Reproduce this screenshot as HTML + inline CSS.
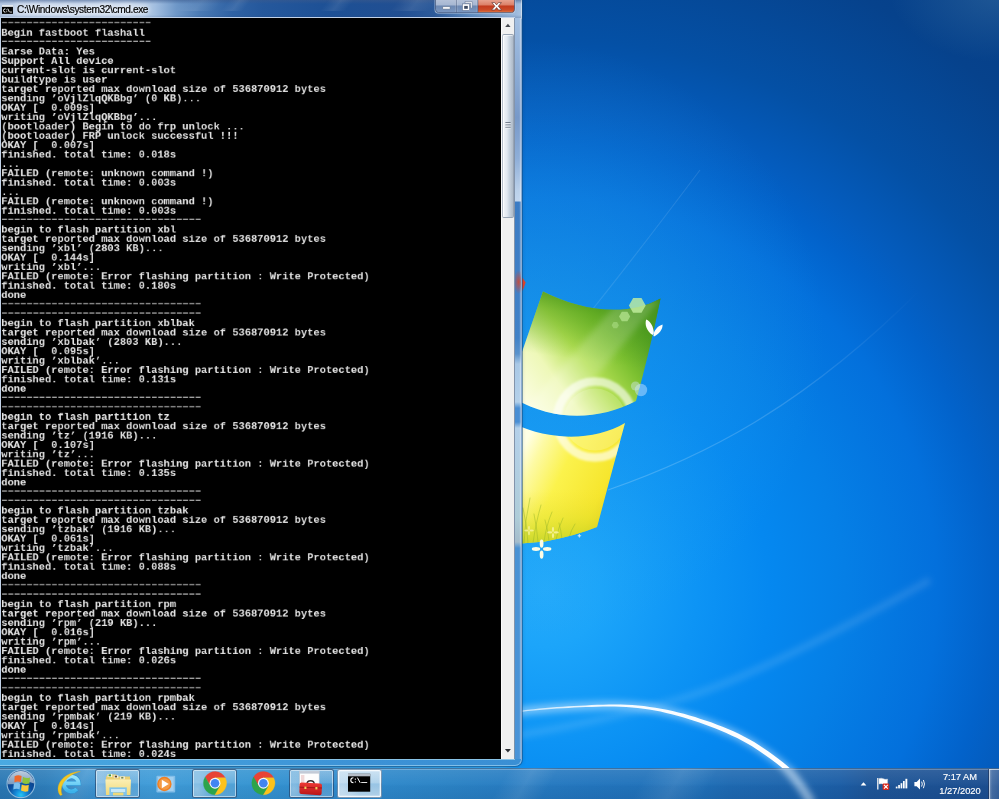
<!DOCTYPE html>
<html><head><meta charset="utf-8"><title>desktop</title>
<style>

html,body{margin:0;padding:0;}
body{width:999px;height:799px;overflow:hidden;position:relative;background:#0b5cb8;font-family:"Liberation Sans",sans-serif;}
#root{position:absolute;left:0;top:0;width:999px;height:799px;overflow:hidden;}
.abs{position:absolute;}
svg{position:absolute;overflow:visible;}
#wall{position:absolute;left:0;top:0;width:999px;height:799px;
 background:
  radial-gradient(ellipse 110px 70px at 1000px -8px, rgba(70,125,170,0.40) 0%, rgba(70,120,170,0) 100%),
  radial-gradient(circle 300px at 525px 340px, rgba(48,168,236,0.42) 0%, rgba(44,164,234,0.25) 50%, rgba(40,160,232,0) 100%),
  radial-gradient(circle 800px at 545px 590px, #24aafb 0%, #1ca5fa 7%, #0d94f5 19%, #0588f0 28%, #057fe6 37.5%, #0370dc 49%, #0262ca 56%, #045cbe 60%, #0450a5 69%, #06428c 84%, #063c84 100%);
}
/* ---------- window ---------- */
#win{position:absolute;left:-8px;top:-8px;width:529.5px;height:773.5px;border-radius:7px;overflow:hidden;
 box-shadow:0 0 0 1px rgba(20,76,128,0.52), 0 1px 4px rgba(0,30,70,0.2);
 background:#3f74b4;}
#win .tbar{position:absolute;left:8px;top:8px;width:522px;height:18.5px;
 background:linear-gradient(90deg,#b4c6e0 0px,#bccde6 20px,#c2d3ea 128px,#a2bee0 155px,#6f98c8 176px,#4a7ab4 200px,#2f62a4 232px,#25589c 262px,#1d5095 330px,#214f92 400px,#2c5a9a 434px,#5f8cc0 470px,#9cb9dc 516px,#a9c4e2 522px);}
#win .tbar:before{content:"";position:absolute;left:0;top:0;width:100%;height:100%;
 background:linear-gradient(180deg,rgba(60,90,140,0.55) 0px,rgba(60,90,140,0) 4px,rgba(60,90,140,0) 15px,rgba(30,60,110,0.25) 18.5px);}
#win .streak{position:absolute;top:0;height:19px;transform:skewX(-38deg);background:linear-gradient(90deg,rgba(255,255,255,0),rgba(255,255,255,0.09),rgba(255,255,255,0));}
#win .rb{position:absolute;left:522.3px;top:26px;width:7.2px;height:748px;
 background:linear-gradient(180deg,#a4c0e2 0px,#8aaad4 60px,#7799c9 100px,#8eaed8 140px,#bad0ea 172px,#c2d6ee 183px,#3c7cc4 184px,#4182c8 320px,#5a92cc 336px,#a9c8e6 346px,#b4d0ea 384px,#4a8ed4 390px,#4a8ed4 404px,#b4d0ea 410px,#aeccd8 500px,#a4bccc 524px,#4a92d4 530px,#4a94d8 748px);
 box-shadow:inset 1px 0 0 rgba(255,255,255,0.35), inset -1.2px 0 0 rgba(255,255,255,0.3);}
#win .bb{position:absolute;left:0px;top:766.6px;width:530px;height:7px;
 background:linear-gradient(90deg,#4aaae2 0%,#44a0dc 30%,#3c92d6 70%,#3a8fd4 100%);}
#win .lb{position:absolute;left:8px;top:26px;width:1px;height:742px;background:#c4d2e6;}
#win .edge{position:absolute;left:0;top:0;width:527.5px;height:771.5px;border-radius:7px;border:1px solid rgba(255,255,255,0.4);border-bottom-color:rgba(190,230,248,0.55);}
#inner{position:absolute;left:0.2px;top:17.3px;width:514.8px;height:742.6px;border:0;background:linear-gradient(180deg,#c2d2e8 0%,#c2d2e8 90%,#88c2e6 100%);}
#gap{position:absolute;left:0;top:765px;width:524px;height:4px;background:linear-gradient(90deg,#3a9cd6 0%,#3c9fdc 60%,#2ea4f0 96%,rgba(34,168,250,0) 100%);}
#client{position:absolute;left:1px;top:18.2px;width:499.8px;height:740.6px;background:#000;overflow:hidden;}
#con{position:absolute;left:0px;top:0px;margin:0;transform-origin:0 0;transform:translate(0.25px,1.35px) scale(0.7645,0.7806);will-change:transform;
 font-family:"Liberation Mono",monospace;font-weight:bold;font-size:13.61px;line-height:12px;color:#e4e4e4;white-space:pre;letter-spacing:0px;}
.dl{display:inline-block;transform-origin:0 50%;transform:translate(-2.45px,-0.7px) scaleX(1.66);letter-spacing:-3.248px;color:#a8a8a8;}
#sb{position:absolute;left:500.8px;top:18.2px;width:13.3px;height:740.6px;background:#f0f0f0;box-shadow:inset 1px 0 0 #fafafa, 0.8px 0 0 #74869c;}
#sb .thumb{position:absolute;left:1.5px;top:15.4px;width:11.8px;height:184.8px;box-sizing:border-box;border:1px solid #98a4b4;border-left-color:#b4bcc8;border-radius:2px;
 background:linear-gradient(90deg,#f2f5f9 0%,#e2e8f0 40%,#cbd6e2 60%,#aebac8 100%);box-shadow:inset 1px 0 0 rgba(255,255,255,0.8), inset 0 1px 0 rgba(255,255,255,0.6);}
#title{will-change:transform;position:absolute;left:17.2px;top:4px;font-size:10.1px;line-height:12px;color:#000;-webkit-text-stroke:0.2px #000;white-space:pre;letter-spacing:-0.36px;
 text-shadow:0 0 5px #fff,0 0 7px #fff,0 0 9px rgba(255,255,255,0.9);}
/* ---------- taskbar ---------- */
#tb{position:absolute;left:0;top:767.6px;width:999px;height:32px;overflow:hidden;
 background:linear-gradient(90deg,#2a78b4 0px,#2e7eba 45px,#3b94d2 95px,#409cd8 150px,#3695d2 250px,#308cce 330px,#2e88ca 390px,#2b83c5 450px,#277cc2 520px,#2376be 590px,#2070b8 700px,#1e6ab2 730px,#1d64ac 800px,#1c5ea6 840px,#1e5698 870px,#1c4e90 999px);
 box-shadow:inset 0 1px 0 rgba(16,64,112,0.5), inset 0 2px 0 rgba(255,255,255,0.32);}
#tb:after{content:"";position:absolute;left:0;top:2px;width:100%;height:30px;background:linear-gradient(180deg,rgba(255,255,255,0.09) 0%,rgba(255,255,255,0.02) 45%,rgba(0,20,60,0.03) 55%,rgba(0,20,60,0.09) 100%);}
#tb .st{position:absolute;top:0;height:32px;transform:skewX(-30deg);background:linear-gradient(90deg,rgba(255,255,255,0),rgba(255,255,255,0.10),rgba(255,255,255,0));}
#tb .arc{position:absolute;left:770px;top:-8px;width:60px;height:50px;}
.tbtn{position:absolute;top:768.9px;height:29.3px;width:45.6px;border-radius:2.5px;box-sizing:border-box;
 border:1px solid rgba(16,48,90,0.62);box-shadow:inset 0 0 0 1px rgba(255,255,255,0.5);
 background:linear-gradient(180deg,rgba(255,255,255,0.36) 0%,rgba(255,255,255,0.24) 46%,rgba(255,255,255,0.12) 52%,rgba(255,255,255,0.20) 100%);}
.tbtn:before{content:"";position:absolute;left:0;top:0;width:60%;height:100%;background:radial-gradient(ellipse 70% 90% at 15% 70%,rgba(255,255,255,0.35),rgba(255,255,255,0));}
.tbtn.act{border-color:rgba(16,48,90,0.4);box-shadow:inset 0 0 0 1.3px rgba(255,255,255,0.82);background:linear-gradient(180deg,rgba(255,255,255,0.74) 0%,rgba(255,255,255,0.62) 46%,rgba(255,255,255,0.50) 52%,rgba(255,255,255,0.64) 100%);}
.clock{will-change:transform;position:absolute;color:#fff;-webkit-text-stroke:0.15px #fff;font-size:9.3px;line-height:11px;text-align:center;width:70px;left:924.6px;white-space:pre;}
#sd{position:absolute;left:988px;top:769px;width:11px;height:30px;box-sizing:border-box;border-left:1px solid rgba(10,30,70,0.55);
 background:linear-gradient(90deg,rgba(255,255,255,0.45) 0px,rgba(255,255,255,0.18) 3px,rgba(255,255,255,0.10) 11px);box-shadow:inset 1px 1px 0 rgba(255,255,255,0.5);}

</style></head>
<body>
<div id="root">
<div id="wall"></div>
<svg style="left:0;top:0" width="999" height="799" viewBox="0 0 999 799">
<defs>
<linearGradient id="gG" gradientUnits="userSpaceOnUse" x1="525" y1="400" x2="660" y2="300"><stop offset="0" stop-color="#fbfde0"/><stop offset="0.22" stop-color="#eef8b8"/><stop offset="0.42" stop-color="#b4e054"/><stop offset="0.62" stop-color="#7cc030"/><stop offset="0.82" stop-color="#4c9a22"/><stop offset="1" stop-color="#3f8f22"/></linearGradient>
<linearGradient id="gG2" gradientUnits="userSpaceOnUse" x1="590" y1="290" x2="580" y2="360"><stop offset="0" stop-color="#3f8c16" stop-opacity="0.85"/><stop offset="0.35" stop-color="#4f9c1a" stop-opacity="0.5"/><stop offset="1" stop-color="#5aa81e" stop-opacity="0"/></linearGradient>
<linearGradient id="gY" gradientUnits="userSpaceOnUse" x1="522" y1="450" x2="625" y2="500"><stop offset="0" stop-color="#ffffe4"/><stop offset="0.14" stop-color="#fdfaa4"/><stop offset="0.4" stop-color="#fbf24c"/><stop offset="0.78" stop-color="#f6e62e"/><stop offset="1" stop-color="#e6cd1e"/></linearGradient>
<linearGradient id="gY2" gradientUnits="userSpaceOnUse" x1="560" y1="545" x2="560" y2="490"><stop offset="0" stop-color="#b4cc20" stop-opacity="0.75"/><stop offset="0.5" stop-color="#d8dc28" stop-opacity="0.35"/><stop offset="1" stop-color="#f0e030" stop-opacity="0"/></linearGradient>
<clipPath id="cpG"><path d="M543 291.4 C580 310 625 318 660.5 298.4 Q650 350 636 401 C600 420 555 422 515 399 L515 372 Z"/></clipPath>
<clipPath id="cpY"><path d="M515 424 C550 441 595 441 625 423 L597 527 Q575 536 545 541.4 L515 544 Z"/></clipPath>
<linearGradient id="arcA" gradientUnits="userSpaceOnUse" x1="520" y1="0" x2="820" y2="0"><stop offset="0" stop-color="#fff" stop-opacity="0.6"/><stop offset="0.3" stop-color="#fff" stop-opacity="0.95"/><stop offset="1" stop-color="#fff" stop-opacity="1"/></linearGradient>
<linearGradient id="arcB" gradientUnits="userSpaceOnUse" x1="608" y1="0" x2="920" y2="0"><stop offset="0" stop-color="#fff" stop-opacity="0.2"/><stop offset="0.6" stop-color="#fff" stop-opacity="0.15"/><stop offset="1" stop-color="#fff" stop-opacity="0"/></linearGradient>
<filter id="bl06" x="-5%" y="-20%" width="110%" height="140%"><feGaussianBlur stdDeviation="0.7"/></filter>
<filter id="bl1" x="-20%" y="-20%" width="140%" height="140%"><feGaussianBlur stdDeviation="1.1"/></filter>
<filter id="bl3" x="-20%" y="-20%" width="140%" height="140%"><feGaussianBlur stdDeviation="3"/></filter>
</defs>
<!-- faint light arcs -->
<path d="M515 736 Q600 722 680 699 Q760 676 930 580" fill="none" stroke="#fff" stroke-opacity="0.12" stroke-width="7" filter="url(#bl3)"/>
<path d="M608 490 C700 458 800 410 920 290" fill="none" stroke="url(#arcB)" stroke-width="1.2"/>
<path d="M592 310 Q640 250 700 170" fill="none" stroke="#fff" stroke-opacity="0.10" stroke-width="1.2"/>
<!-- bright arc bottom -->
<path d="M505.0 713.5 L510.7 712.6 L516.5 711.8 L522.2 711.1 L528.0 710.4 L533.7 709.8 L539.5 709.2 L545.3 708.7 L551.1 708.3 L556.8 707.8 L562.6 707.5 L568.4 707.1 L574.2 706.8 L580.0 706.5 L585.8 706.2 L591.6 706.0 L597.4 705.8 L603.2 705.6 L609.0 705.6 L614.8 705.6 L620.6 705.7 L626.3 706.0 L632.1 706.3 L637.9 706.8 L643.7 707.4 L649.4 708.2 L655.2 709.1 L660.9 710.1 L666.5 711.3 L672.2 712.6 L677.8 714.0 L683.4 715.5 L689.0 717.2 L694.5 718.9 L700.0 720.7 L705.5 722.6 L710.9 724.6 L716.4 726.6 L721.8 728.8 L727.1 731.0 L732.5 733.3 L737.7 735.8 L742.9 738.4 L747.9 741.2 L752.9 744.1 L757.8 747.2 L762.7 750.4 L767.5 753.7 L772.2 757.1 L776.8 760.6 L781.4 764.2 L785.8 767.9 L790.1 771.8 L794.2 775.8 L798.2 780.1 L802.0 784.5 L805.7 789.0 L809.2 793.6 L812.7 798.3 L816.0 803.0" fill="none" stroke="#cfeaff" stroke-opacity="0.5" stroke-width="9" filter="url(#bl3)"/>
<polygon points="505.1,714.0 510.8,713.2 516.5,712.4 522.3,711.7 528.0,711.0 533.8,710.4 539.6,709.9 545.3,709.4 551.1,709.0 556.9,708.6 562.7,708.2 568.5,707.9 574.2,707.6 580.0,707.3 585.8,707.1 591.6,706.9 597.4,706.7 603.2,706.6 609.0,706.6 614.7,706.6 620.5,706.8 626.3,707.1 632.0,707.5 637.8,708.1 643.5,708.7 649.2,709.6 654.9,710.5 660.6,711.6 666.2,712.9 671.8,714.2 677.4,715.7 682.9,717.3 688.4,719.0 693.9,720.7 699.4,722.6 704.8,724.6 710.2,726.6 715.6,728.6 721.0,730.8 726.3,733.0 731.5,735.4 736.7,737.8 741.8,740.4 746.8,743.2 751.7,746.1 756.6,749.2 761.4,752.4 766.1,755.7 770.7,759.1 775.4,762.5 779.9,766.1 784.2,769.7 788.4,773.6 792.4,777.6 796.3,781.8 800.0,786.1 803.6,790.6 807.1,795.2 810.5,799.8 813.8,804.5 818.2,801.5 814.8,796.7 811.3,792.0 807.7,787.4 804.0,782.9 800.1,778.4 796.0,774.1 791.8,770.0 787.4,766.0 782.9,762.3 778.3,758.7 773.6,755.2 768.8,751.8 764.0,748.5 759.1,745.2 754.1,742.1 749.1,739.2 743.9,736.4 738.7,733.7 733.4,731.3 728.0,728.9 722.6,726.7 717.1,724.7 711.7,722.6 706.2,720.7 700.6,718.9 695.1,717.1 689.5,715.4 683.9,713.8 678.3,712.4 672.6,711.0 666.9,709.8 661.1,708.7 655.4,707.7 649.6,706.9 643.8,706.1 638.0,705.6 632.2,705.1 626.4,704.8 620.6,704.6 614.8,704.5 609.0,704.6 603.1,704.7 597.3,704.8 591.5,705.1 585.7,705.4 580.0,705.7 574.2,706.0 568.4,706.3 562.6,706.7 556.8,707.1 551.0,707.6 545.2,708.0 539.4,708.6 533.7,709.2 527.9,709.8 522.1,710.5 516.4,711.3 510.7,712.1 504.9,713.0" fill="url(#arcA)" filter="url(#bl06)"/>
<!-- red tip -->
<path d="M515 271 Q521.5 275 525.6 282.6 Q524 289 521 293 L515 294 Z" fill="#e4452c"/>
<!-- green pane -->
<g clip-path="url(#cpG)">
<rect x="510" y="285" width="160" height="140" fill="url(#gG)"/>
<rect x="510" y="285" width="160" height="140" fill="url(#gG2)"/>
<path d="M515 420 L620 300 L660 300 L560 420 Z" fill="#fff" fill-opacity="0.18" filter="url(#bl3)"/>
<circle cx="595" cy="419.6" r="38" fill="none" stroke="#fff" stroke-opacity="0.6" stroke-width="8.5" filter="url(#bl1)"/>
<circle cx="595" cy="419.6" r="31" fill="#fff" fill-opacity="0.16"/>
</g>
<!-- yellow pane -->
<g clip-path="url(#cpY)">
<rect x="510" y="415" width="130" height="140" fill="url(#gY)"/>
<rect x="510" y="415" width="130" height="140" fill="url(#gY2)"/>
<g fill="none" stroke="#9cb82a" stroke-opacity="0.55" stroke-width="0.9" stroke-linecap="round">
<path d="M524 543 Q525 520 530 498"/><path d="M528 543 Q527 525 523 508"/><path d="M533 543 Q536 522 541 505"/><path d="M538 542 Q537 528 534 514"/>
<path d="M544 542 Q546 526 552 512"/><path d="M549 541 Q548 530 545 520"/><path d="M556 540 Q558 528 563 518"/><path d="M562 539 Q561 530 559 523"/><path d="M569 538 Q571 530 575 524"/>
<path d="M519 543 Q519 528 517 512"/></g>
<circle cx="595" cy="419.6" r="38" fill="none" stroke="#fff" stroke-opacity="0.62" stroke-width="8.5" filter="url(#bl1)"/>
<circle cx="595" cy="419.6" r="31" fill="#fff" fill-opacity="0.2"/>
</g>
<!-- hexagons, flare, butterfly, flower -->
<polygon points="645.7,305.4 641.5,312.7 633.1,312.7 628.9,305.4 633.1,298.1 641.5,298.1" fill="#c4f0a0" fill-opacity="0.8"/>
<polygon points="630.2,316.5 627.4,321.3 621.8,321.3 619.0,316.5 621.8,311.7 627.4,311.7" fill="#c4f0a0" fill-opacity="0.6"/>
<polygon points="618.9,325.2 617.1,328.3 613.5,328.3 611.7,325.2 613.5,322.1 617.1,322.1" fill="#c4f0a0" fill-opacity="0.4"/>
<circle cx="641" cy="390" r="6.2" fill="#bfe0ff" fill-opacity="0.5"/><circle cx="635.5" cy="386" r="4.6" fill="#d8ecff" fill-opacity="0.4"/>
<path d="M652.6 335 C646.4 331 644.6 324 646.2 319.4 C650.6 321 653.8 327 653.8 333 Z M653.4 335.6 C654 330 658 326 662.6 324.6 C662.8 329.6 659 334.2 654 336.6 Z" fill="#fdfefc"/>
<g fill="#fbfce6"><ellipse cx="541.6" cy="543.6" rx="1.9" ry="4.2"/><ellipse cx="541.6" cy="554.6" rx="1.9" ry="4.2"/><ellipse cx="536" cy="549" rx="4.2" ry="1.9"/><ellipse cx="547.2" cy="549" rx="4.2" ry="1.9"/></g>
<g fill="#f6f29a" fill-opacity="0.85"><ellipse cx="529" cy="528" rx="0.9" ry="2.2"/><ellipse cx="529" cy="533" rx="0.9" ry="2.2"/><ellipse cx="526.4" cy="530.5" rx="2.2" ry="0.9"/><ellipse cx="531.6" cy="530.5" rx="2.2" ry="0.9"/></g>
<g fill="#f6f29a" fill-opacity="0.9"><ellipse cx="553" cy="529.4" rx="1.1" ry="2.6"/><ellipse cx="553" cy="535.6" rx="1.1" ry="2.6"/><ellipse cx="549.8" cy="532.4" rx="2.6" ry="1.1"/><ellipse cx="556.2" cy="532.4" rx="2.6" ry="1.1"/></g>
<g fill="#cfe8fb" fill-opacity="0.8"><ellipse cx="579.4" cy="535.8" rx="0.8" ry="2"/><ellipse cx="579.4" cy="535.8" rx="2" ry="0.8"/></g>
</svg>

<div id="gap"></div><div id="win">
<div class="tbar"></div>
<div class="streak" style="left:190px;width:40px"></div>
<div class="streak" style="left:236px;width:22px"></div>
<div class="streak" style="left:335px;width:26px"></div>
<div class="streak" style="left:405px;width:40px"></div>
<div class="rb"></div><div style="position:absolute;left:522.6px;top:277px;width:6.4px;height:26px;background:radial-gradient(ellipse 5px 12px at 60% 50%,rgba(214,70,44,0.85),rgba(214,70,44,0));"></div><div class="bb"></div><div class="lb"></div><div class="edge"></div>
</div>
<svg style="left:435px;top:0px" width="81" height="15" viewBox="0 0 81 15">
<defs>
<linearGradient id="bg1" x1="0" y1="0" x2="0" y2="1"><stop offset="0" stop-color="#bcc8dc"/><stop offset="0.5" stop-color="#a6b7d2"/><stop offset="0.56" stop-color="#6c88b2"/><stop offset="1" stop-color="#7d99c2"/></linearGradient>
<linearGradient id="bg2" x1="0" y1="0" x2="0" y2="1"><stop offset="0" stop-color="#eeb6a6"/><stop offset="0.5" stop-color="#dc8068"/><stop offset="0.56" stop-color="#c23a1e"/><stop offset="0.82" stop-color="#cc4c28"/><stop offset="1" stop-color="#e2824e"/></linearGradient>
<clipPath id="bc"><path d="M0.5 -3 H79.5 V9.5 Q79.5 12.6 76.5 12.6 H3.5 Q0.5 12.6 0.5 9.5 Z"/></clipPath>
</defs>
<path d="M-0.4 -3 H80.4 V9.8 Q80.4 13.6 76.8 13.6 H3.2 Q-0.4 13.6 -0.4 9.8 Z" fill="rgba(215,230,246,0.75)"/>
<g clip-path="url(#bc)">
<rect x="0" y="-3" width="43" height="16" fill="url(#bg1)"/>
<rect x="43" y="-3" width="37" height="16" fill="url(#bg2)"/>
</g>
<path d="M0.5 -3 H79.5 V9.5 Q79.5 12.6 76.5 12.6 H3.5 Q0.5 12.6 0.5 9.5 Z" fill="none" stroke="rgba(40,60,100,0.75)" stroke-width="0.8"/>
<path d="M21.3 0 V12.4 M42.8 0 V12.4" stroke="rgba(40,60,100,0.7)" stroke-width="0.8"/>
<path d="M22 0 V12 M20.6 0 V12 M42.1 0 V12" stroke="rgba(255,255,255,0.35)" stroke-width="0.6"/>
<rect x="7.6" y="6.6" width="7.6" height="2.6" rx="0.5" fill="#fff" stroke="#4a5f80" stroke-width="0.6"/>
<g>
<path d="M30 1.6 H37.2 V8.2 H35.6 V3.2 H30 Z" fill="#fff" stroke="#4a5f80" stroke-width="0.5"/>
<rect x="27.4" y="3.9" width="7.2" height="6.6" fill="#fff" stroke="#4a5f80" stroke-width="0.5"/>
<rect x="29.2" y="5.9" width="3.6" height="2.9" fill="#3c4a62"/>
</g>
<path d="M56.8 2.6 L59.8 2.6 L61.6 4.9 L63.4 2.6 L66.4 2.6 L63.3 6.2 L66.6 10 L63.5 10 L61.6 7.6 L59.7 10 L56.6 10 L59.9 6.2 Z" fill="#fff" stroke="#6a3830" stroke-width="0.7"/>
</svg>
<svg style="left:2.1px;top:5px" width="12" height="10" viewBox="0 0 12 10">
<rect x="0" y="0" width="11" height="8.9" fill="#000"/>
<rect x="0" y="0" width="11" height="1.9" fill="#e4e8ee"/>
<path d="M3.4 3.8 Q1.5 3.8 1.5 5.5 Q1.5 7.2 3.4 7.2" stroke="#fff" stroke-width="1" fill="none"/>
<rect x="4.3" y="4.4" width="0.9" height="0.9" fill="#fff"/><rect x="4.3" y="6.3" width="0.9" height="0.9" fill="#fff"/>
<path d="M5.8 3.6 L7.4 7.2" stroke="#fff" stroke-width="0.9"/>
<rect x="8" y="6.6" width="2" height="0.9" fill="#ddd"/>
</svg>
<div id="title">C:\Windows\system32\cmd.exe</div>
<div id="inner"></div>
<div id="client"><pre id="con"><span class="dl">------------------------</span>
Begin fastboot flashall
<span class="dl">------------------------</span>
Earse Data: Yes
Support All device
current-slot is current-slot
buildtype is user
target reported max download size of 536870912 bytes
sending ’oVjlZlqQKBbg’ (0 KB)...
OKAY [  0.009s]
writing ’oVjlZlqQKBbg’...
(bootloader) Begin to do frp unlock ...
(bootloader) FRP unlock successful !!!
OKAY [  0.007s]
finished. total time: 0.018s
...
FAILED (remote: unknown command !)
finished. total time: 0.003s
...
FAILED (remote: unknown command !)
finished. total time: 0.003s
<span class="dl">--------------------------------</span>
begin to flash partition xbl
target reported max download size of 536870912 bytes
sending ’xbl’ (2803 KB)...
OKAY [  0.144s]
writing ’xbl’...
FAILED (remote: Error flashing partition : Write Protected)
finished. total time: 0.180s
done
<span class="dl">--------------------------------</span>
<span class="dl">--------------------------------</span>
begin to flash partition xblbak
target reported max download size of 536870912 bytes
sending ’xblbak’ (2803 KB)...
OKAY [  0.095s]
writing ’xblbak’...
FAILED (remote: Error flashing partition : Write Protected)
finished. total time: 0.131s
done
<span class="dl">--------------------------------</span>
<span class="dl">--------------------------------</span>
begin to flash partition tz
target reported max download size of 536870912 bytes
sending ’tz’ (1916 KB)...
OKAY [  0.107s]
writing ’tz’...
FAILED (remote: Error flashing partition : Write Protected)
finished. total time: 0.135s
done
<span class="dl">--------------------------------</span>
<span class="dl">--------------------------------</span>
begin to flash partition tzbak
target reported max download size of 536870912 bytes
sending ’tzbak’ (1916 KB)...
OKAY [  0.061s]
writing ’tzbak’...
FAILED (remote: Error flashing partition : Write Protected)
finished. total time: 0.088s
done
<span class="dl">--------------------------------</span>
<span class="dl">--------------------------------</span>
begin to flash partition rpm
target reported max download size of 536870912 bytes
sending ’rpm’ (219 KB)...
OKAY [  0.016s]
writing ’rpm’...
FAILED (remote: Error flashing partition : Write Protected)
finished. total time: 0.026s
done
<span class="dl">--------------------------------</span>
<span class="dl">--------------------------------</span>
begin to flash partition rpmbak
target reported max download size of 536870912 bytes
sending ’rpmbak’ (219 KB)...
OKAY [  0.014s]
writing ’rpmbak’...
FAILED (remote: Error flashing partition : Write Protected)
finished. total time: 0.024s</pre></div>
<div id="sb"><div class="thumb"></div>
<svg style="left:0;top:0" width="14" height="741" viewBox="0 0 14 741">
<path d="M4.2 9 L6.9 5.8 L9.6 9 Z" fill="#44484e"/>
<path d="M3.9 731 L6.9 734.6 L9.9 731 Z" fill="#2c2f34"/>
<g stroke="#5c6676" stroke-width="0.9"><path d="M4.4 104.6 H9.6 M4.4 107 H9.6 M4.4 109.3 H9.6"/></g>
<g stroke="#fff" stroke-width="0.7" opacity="0.85"><path d="M4.4 105.5 H9.6 M4.4 107.9 H9.6 M4.4 110.2 H9.6"/></g>
</svg></div>

<div id="tb"><div class="st" style="left:500px;width:50px"></div><div class="st" style="left:640px;width:70px"></div><div class="st" style="left:60px;width:40px"></div>
<svg style="left:0;top:-767.6px" width="999" height="799" viewBox="0 0 999 799"><path d="M776 758 Q796 776 812 804" fill="none" stroke="#d8ecfb" stroke-opacity="0.62" stroke-width="9" filter="url(#bl3)"/></svg></div>
<div class="tbtn" style="left:94.6px"></div>
<div class="tbtn" style="left:191.8px"></div>
<div class="tbtn" style="left:288.8px"></div>
<div class="tbtn act" style="left:336.8px"></div>
<svg style="left:0;top:764px" width="999" height="35" viewBox="0 764 999 35">
<defs>
<radialGradient id="orbG" cx="0.5" cy="0.92" r="0.75"><stop offset="0" stop-color="#26c6f4"/><stop offset="0.28" stop-color="#1588d6"/><stop offset="0.6" stop-color="#0b4f9f"/><stop offset="1" stop-color="#0a3f86"/></radialGradient>
<linearGradient id="orbH" x1="0" y1="0" x2="0" y2="1"><stop offset="0" stop-color="#c9d6e4" stop-opacity="0.95"/><stop offset="1" stop-color="#8fa9c6" stop-opacity="0.85"/></linearGradient>
<linearGradient id="ieG" x1="0" y1="0" x2="0" y2="1"><stop offset="0" stop-color="#9be4fb"/><stop offset="0.5" stop-color="#6fd0f6"/><stop offset="1" stop-color="#3cb2ea"/></linearGradient>
<linearGradient id="foG" x1="0" y1="0" x2="0" y2="1"><stop offset="0" stop-color="#fbefb4"/><stop offset="1" stop-color="#f1d978"/></linearGradient>
<linearGradient id="tbxG" x1="0" y1="0" x2="0" y2="1"><stop offset="0" stop-color="#ee3a34"/><stop offset="1" stop-color="#b81418"/></linearGradient>
</defs>
<!-- start orb -->
<circle cx="20.9" cy="783.8" r="14.4" fill="rgba(200,226,246,0.62)"/>
<circle cx="20.9" cy="783.8" r="13.3" fill="url(#orbG)"/>
<path d="M7.62 784.2 A13.3 13.3 0 0 1 34.18 783.4 Q27 781 20.9 782.8 Q14 784.8 7.62 784.2 Z" fill="url(#orbH)"/>
<path d="M14.6 776.2 Q18 774.6 21.6 776 L20.9 782 Q17.6 780.8 14.4 782.2 Z" fill="#f0682a"/>
<path d="M22.9 776.8 Q26.4 778.8 30 777.4 L29.4 783.6 Q25.8 784.8 22.3 783 Z" fill="#8cc43c"/>
<path d="M13.8 783.4 Q17 782 20.3 783.4 L19.6 789.4 Q16.6 788 13.3 789.4 Z" fill="#7cc0ee"/>
<path d="M21.7 784.4 Q25 786.2 28.8 785 L28.2 791.2 Q24.6 792.4 21 790.6 Z" fill="#f8c83a"/>
<!-- IE -->
<g>
<path d="M76.8 788.9 A7.4 7.4 0 1 1 78.7 783.4 L64.4 783.4" fill="none" stroke="#2a92d4" stroke-width="4.8"/>
<path d="M76.8 788.9 A7.4 7.4 0 1 1 78.7 783.4 L64.4 783.4" fill="none" stroke="url(#ieG)" stroke-width="3.7"/>
<path d="M60.4 795.6 C53.6 787 62 772.5 80.2 771.5 C66 775.2 58.6 786 62.2 794.8 Z" fill="#f3c822" stroke="#e0a818" stroke-width="0.4"/>
</g>
<!-- explorer folder -->
<g>
<path d="M106 777 L108 774.5 H116 L117.5 776.5 H130 V794 H106 Z" fill="#e9cf72"/>
<rect x="107.6" y="774" width="4.6" height="3" fill="#f6f2dc"/><rect x="113.8" y="775.2" width="4.6" height="3" fill="#f6ecd0"/><rect x="120.2" y="776.4" width="4.6" height="3" fill="#f8f2dc"/><rect x="108.6" y="774.4" width="2.4" height="1.9" fill="#3d9a3c"/><rect x="114.8" y="775.7" width="2.2" height="1.7" fill="#5a4426"/><rect x="121.2" y="776.9" width="2.2" height="1.7" fill="#7a8a4a"/>
<path d="M105.4 779.6 H131 L130.4 795 H106 Z" fill="url(#foG)"/>
<path d="M109.4 787.4 H126.8 V795.4 H109.4 Z" fill="#7fc4ec"/>
<path d="M111 789 H125.2 V792 H111 Z" fill="#c8e8f8"/>
<path d="M113 792.6 H123.4 V795.4 H113 Z" fill="#f1d978"/>
</g>
<!-- WMP -->
<g>
<rect x="156.4" y="775.8" width="18.8" height="16.6" rx="1" fill="#8ec4ec" opacity="0.85"/>
<rect x="158" y="777" width="15.6" height="14" fill="#a9d4f2" opacity="0.8"/>
<circle cx="164.4" cy="784" r="7.2" fill="#f07f22"/>
<circle cx="164.4" cy="784" r="5.8" fill="#f39a44"/>
<path d="M161.8 779.8 L168.8 784 L161.8 788.2 Z" fill="#fff"/>
</g>
<!-- chrome -->
<path d="M215.00 777.75 L225.24 777.75 A11.6 11.6 0 0 0 205.16 777.06 L210.28 785.93 L215.00 783.20 Z" fill="#e74335" stroke="#e74335" stroke-width="0.3"/><path d="M219.72 785.93 L214.60 794.79 A11.6 11.6 0 0 0 225.24 777.75 L215.00 777.75 L215.00 783.20 Z" fill="#fcc21b" stroke="#fcc21b" stroke-width="0.3"/><path d="M210.28 785.93 L205.16 777.06 A11.6 11.6 0 0 0 214.60 794.79 L219.72 785.93 L215.00 783.20 Z" fill="#2da44a" stroke="#2da44a" stroke-width="0.3"/><circle cx="215" cy="783.2" r="5.45" fill="#f6f8fa"/><circle cx="215" cy="783.2" r="4.29" fill="#4285f2"/>
<path d="M263.40 777.75 L273.64 777.75 A11.6 11.6 0 0 0 253.56 777.06 L258.68 785.93 L263.40 783.20 Z" fill="#e74335" stroke="#e74335" stroke-width="0.3"/><path d="M268.12 785.93 L263.00 794.79 A11.6 11.6 0 0 0 273.64 777.75 L263.40 777.75 L263.40 783.20 Z" fill="#fcc21b" stroke="#fcc21b" stroke-width="0.3"/><path d="M258.68 785.93 L253.56 777.06 A11.6 11.6 0 0 0 263.00 794.79 L268.12 785.93 L263.40 783.20 Z" fill="#2da44a" stroke="#2da44a" stroke-width="0.3"/><circle cx="263.4" cy="783.2" r="5.45" fill="#f6f8fa"/><circle cx="263.4" cy="783.2" r="4.29" fill="#4285f2"/>
<!-- toolbox -->
<g>
<rect x="299.6" y="771.2" width="19.6" height="14.6" fill="#fdfdfd" stroke="#b8c0cc" stroke-width="0.6"/>
<rect x="299.6" y="771.2" width="19.6" height="2.4" fill="#c2cad6"/>
<rect x="301" y="775" width="3.4" height="9" fill="#f0d8d8"/>
<path d="M307 784 Q307 780.8 310.6 780.8 Q314.2 780.8 314.2 784" fill="none" stroke="#3a3030" stroke-width="1.4"/>
<path d="M299.6 784.4 Q299.6 782.6 301.4 782.6 L320 783.4 Q322 783.6 322 785.4 L321.6 793.6 Q321.4 795.4 319.6 795.2 L301.2 794 Q299.4 793.8 299.4 792 Z" fill="url(#tbxG)"/>
<path d="M299.6 787.2 L322 788" stroke="#8a1010" stroke-width="0.7"/>
<rect x="304.4" y="786.6" width="2" height="2.4" fill="#f4d060"/><rect x="315.4" y="787" width="2" height="2.4" fill="#f4d060"/>
</g>
<!-- cmd -->
<g>
<rect x="348" y="773.8" width="22.2" height="17.9" fill="#000"/>
<rect x="348" y="773.8" width="22.2" height="2.5" fill="#b4bcc6"/>
<path d="M353.4 777.8 Q350.8 777.8 350.8 780.2 Q350.8 782.6 353.4 782.6" stroke="#fff" stroke-width="1.1" fill="none"/>
<rect x="354.8" y="778.6" width="1.1" height="1.1" fill="#fff"/><rect x="354.8" y="781.4" width="1.1" height="1.1" fill="#fff"/>
<path d="M357.4 777.6 L360.2 782.8" stroke="#fff" stroke-width="1"/>
<rect x="361.2" y="782" width="6" height="1" fill="#e0e0e0"/>
</g>
<!-- tray -->
<path d="M860.6 785.6 L863.5 782.2 L866.4 785.6 Z" fill="#fff"/>
<g>
<path d="M877.8 778 V789.6" stroke="#f4f4f4" stroke-width="1.3"/>
<path d="M879 778.6 Q881.5 777.6 883.6 778.8 Q885.6 779.8 887.6 779 V784.4 Q885.6 785.2 883.6 784.2 Q881.5 783.2 879 784 Z" fill="#fff" stroke="#c8d0dc" stroke-width="0.4"/>
<rect x="882.6" y="783.4" width="6.6" height="6.6" rx="1" fill="#d8281c"/>
<path d="M884 784.8 L887.8 788.6 M887.8 784.8 L884 788.6" stroke="#fff" stroke-width="1.2"/>
</g>
<g fill="#fff">
<rect x="895.8" y="786.6" width="1.7" height="1.8"/><rect x="898.2" y="785" width="1.7" height="3.4"/><rect x="900.6" y="783.2" width="1.7" height="5.2"/><rect x="903" y="781" width="1.7" height="7.4"/><rect x="905.4" y="778.8" width="1.9" height="9.6"/>
</g>
<g>
<path d="M914.4 782 H916.6 L920 778.6 V789.6 L916.6 786.2 H914.4 Z" fill="#fff"/>
<path d="M921.6 781.6 Q923 784 921.6 786.6 M923.4 780 Q925.6 784 923.4 788.2" stroke="#fff" stroke-width="1" fill="none" opacity="0.95"/>
</g>
</svg>
<div class="clock" style="top:772.4px">7:17 AM</div>
<div class="clock" style="top:785.6px">1/27/2020</div>
<div id="sd"></div>

</div>
</body></html>
